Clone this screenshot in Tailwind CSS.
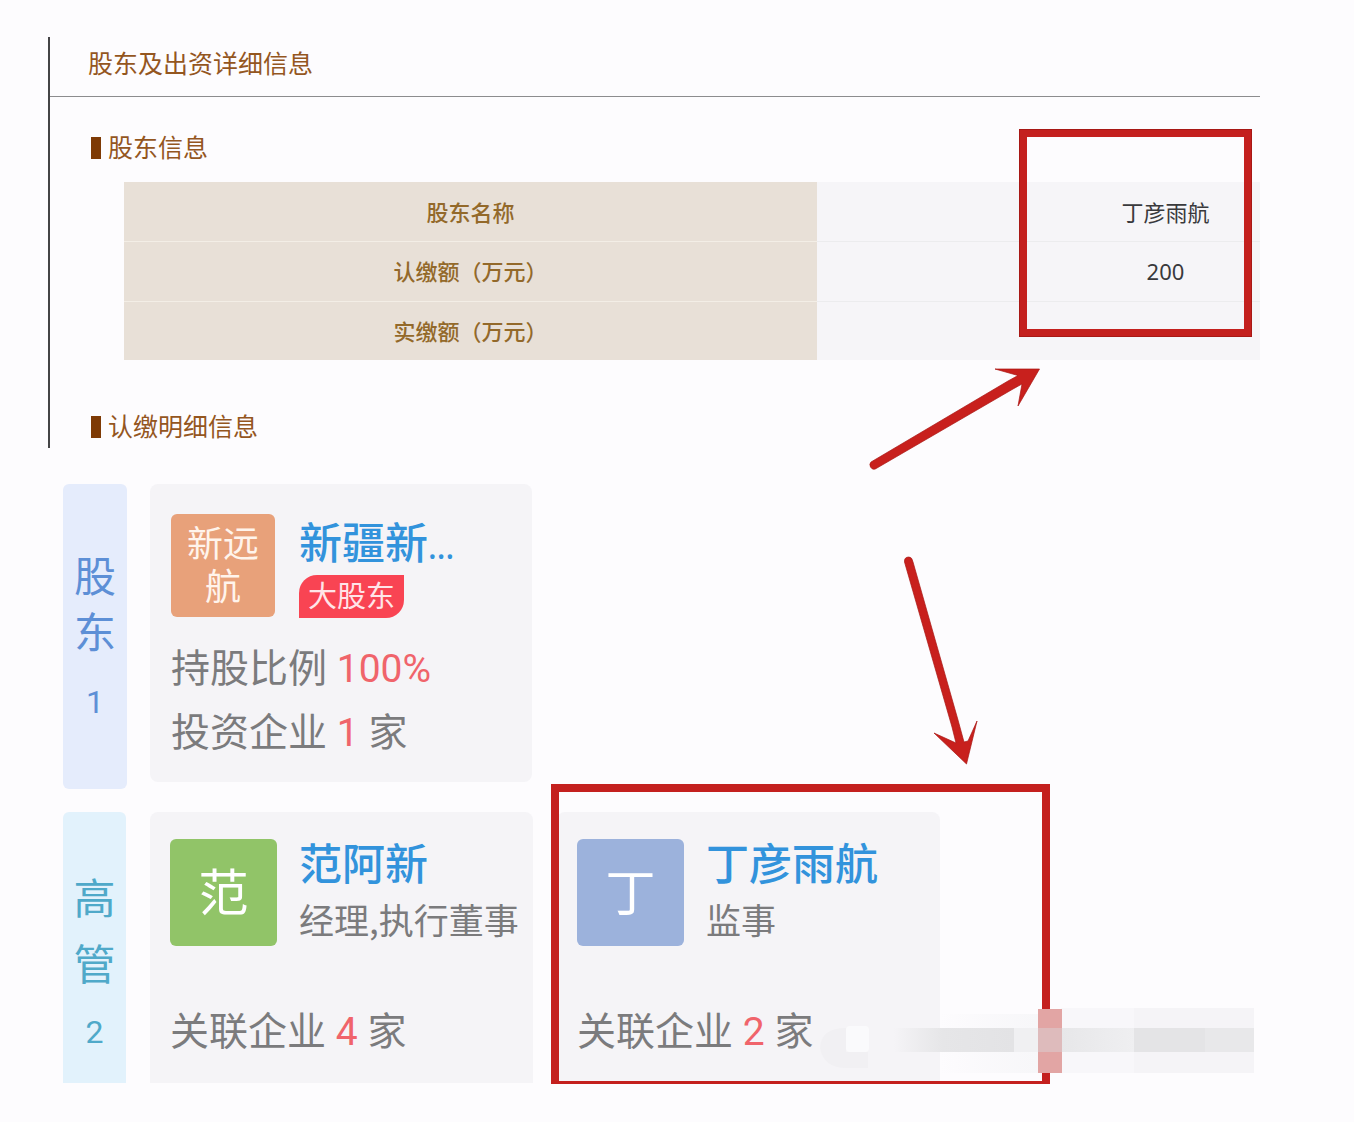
<!DOCTYPE html>
<html lang="zh-CN">
<head>
<meta charset="utf-8">
<meta name="viewport" content="width=device-width, initial-scale=1">
<title>股东及出资详细信息</title>
<script src="https://cdn.jsdelivr.net/npm/@tailwindcss/browser@4"></script>
</head>
<body class="bg-[#fdfcfe] font-['Noto_Sans_CJK_SC',sans-serif]">
<main class="relative pt-[37px] pb-10">

  <!-- Registry record -->
  <section class="relative ml-12 mr-[94px] border-l-2 border-[#444446] pb-[6px] text-[25px] leading-[30px] text-[#94561f]">
    <h1 class="border-b border-[#8c8c8e] pt-[10px] pb-[19px] pl-[38px]">股东及出资详细信息</h1>
    <h2 class="mt-9 flex items-center gap-[7px] pl-[41px]"><span class="h-[22px] w-[10px] bg-[#7e3a05]"></span><span class="pb-[3px] leading-[27px]">股东信息</span></h2>
    <div class="mt-[19px] pl-[74px]">
      <table class="w-full table-fixed border-collapse text-[22px]">
        <tbody>
          <tr class="h-[59px] border-b border-[#ececee]">
            <th scope="row" class="w-[61%] border-b border-[#f3eee6] bg-[#e8e0d7] font-medium text-[#93692a]">股东名称</th>
            <td class="bg-[#f6f5f8] pl-[254px] text-center text-[#39393c]">丁彦雨航</td>
          </tr>
          <tr class="h-[60px] border-b border-[#ececee]">
            <th scope="row" class="border-b border-[#f3eee6] bg-[#e8e0d7] pb-[2px] font-medium text-[#93692a]">认缴额（万元）</th>
            <td class="bg-[#f6f5f8] pl-[254px] text-center font-['Noto_Sans',sans-serif] text-[#39393c]">200</td>
          </tr>
          <tr class="h-[59px]">
            <th scope="row" class="bg-[#e8e0d7] pb-[2px] font-medium text-[#93692a]">实缴额（万元）</th>
            <td class="bg-[#f6f5f8]"></td>
          </tr>
        </tbody>
      </table>
    </div>
    <h2 class="mt-[52px] flex items-center gap-[7px] pl-[41px]"><span class="h-[22px] w-[10px] bg-[#7e3a05]"></span><span class="pb-[3px] leading-[27px]">认缴明细信息</span></h2>
    <!-- Highlight around the shareholder's name -->
    <div class="absolute top-[92px] right-2 h-[208px] w-[233px] border-8 border-[#c4201e] outline-1 -outline-offset-1 outline-[#a81815]"></div>
  </section>

  <!-- Shareholders -->
  <section class="mt-9 flex items-start gap-[23px] pl-[63px]">
    <h2 class="flex h-[305px] w-16 flex-col items-center rounded-md bg-[#e5ecfc] pt-[62px] text-[42px] leading-[56px] text-[#5d8fd6]">
      <span>股</span><span>东</span><span class="mt-4 font-[Roboto,sans-serif] text-[32px]">1</span>
    </h2>
    <article class="h-[298px] w-[382px] rounded-lg bg-[#f5f4f7] pt-[30px] pl-[21px] text-[39px] leading-[64px] text-[#7b7b7d]">
      <div class="flex gap-6">
        <div class="flex h-[103px] w-[104px] items-center justify-center rounded-md bg-[#e8a17a] px-4 pb-[5px] text-center text-[36px] leading-[43px] text-[#fff4ec]">新远航</div>
        <div class="h-[103px]">
          <a href="#" class="block h-[61px] text-[43px] leading-[52px] font-medium text-[#3293dc]">新疆新<span class="font-['Noto_Sans',sans-serif] text-[32px]">...</span></a>
          <span class="flex h-[43px] w-[105px] items-center justify-center rounded-tl-[18px] rounded-br-[18px] bg-[#f94453] pb-[6px] text-[29px] text-[#ffe5e8]">大股东</span>
        </div>
      </div>
      <p class="mt-4 h-16">持股比例 <span class="mx-px font-[Roboto,sans-serif] text-[#f0646b]">100%</span></p>
      <p class="h-16">投资企业 <span class="mx-px font-[Roboto,sans-serif] text-[#f0646b]">1</span> 家</p>
    </article>
  </section>

  <!-- Executives -->
  <section class="mt-[23px] flex items-start pl-[63px]">
    <h2 class="flex h-[271px] w-[63px] flex-col items-center rounded-t-md bg-[#e2f2fc] pt-[51px] text-[42px] leading-[66px] text-[#4fa9c9]">
      <span>高</span><span>管</span><span class="mt-1 font-[Roboto,sans-serif] text-[32px]">2</span>
    </h2>
    <article class="ml-6 h-[271px] w-[383px] rounded-t-lg bg-[#f5f4f7] pt-[27px] pl-5 text-[39px] leading-[64px] text-[#7b7b7d]">
      <div class="flex gap-[22px]">
        <div class="flex size-[107px] items-center justify-center rounded-md bg-[#91c468] pb-2 text-[50px] text-white">范</div>
        <div class="whitespace-nowrap">
          <a href="#" class="block text-[43px] leading-[44px] font-medium text-[#3293dc]">范阿新</a>
          <p class="text-[35px] leading-[72px]">经理,执行董事</p>
        </div>
      </div>
      <p class="mt-[41px]">关联企业 <span class="mx-px font-[Roboto,sans-serif] text-[#f0646b]">4</span> 家</p>
    </article>
    <article class="ml-6 h-[271px] w-[383px] rounded-t-lg bg-[#f5f4f7] pt-[27px] pl-5 text-[39px] leading-[64px] text-[#7b7b7d]">
      <div class="flex gap-[22px]">
        <div class="flex size-[107px] items-center justify-center rounded-md bg-[#9cb2dc] pb-2 text-[50px] text-white">丁</div>
        <div class="whitespace-nowrap">
          <a href="#" class="block text-[43px] leading-[44px] font-medium text-[#3293dc]">丁彦雨航</a>
          <p class="text-[35px] leading-[72px]">监事</p>
        </div>
      </div>
      <p class="mt-[41px]">关联企业 <span class="mx-px font-[Roboto,sans-serif] text-[#f0646b]">2</span> 家</p>
    </article>
  </section>

  <!-- Highlight around the supervisor card -->
  <div class="absolute top-[784px] left-[551px] h-[300px] w-[499px] border-t-8 border-r-8 border-b-[3px] border-l-8 border-[#c4201e]"></div>

  <!-- Arrows -->
  <svg class="pointer-events-none absolute top-[360px] left-[860px]" width="200" height="420" viewBox="860 360 200 420" fill="#c8201d" stroke="#a91613" stroke-width=".7" aria-hidden="true">
    <path d="M871 462 L1008 381 L1018 375.500 L995 369 L1039.500 369 L1018 406 L1022 384 L1013 389 L877 468 Q873 471 870.500 467 Q869 464 871 462Z"/>
    <path d="M904.500 562 Q904 557 909 557 Q912 557 913 562 L958 720 L964 742 L968 741 L977 721 L966.500 764 L934 733 L956 743 L952 727 Z"/>
  </svg>

  <!-- Pixelated patch -->
  <svg class="pointer-events-none absolute top-[1007px] left-[820px]" width="434" height="68" viewBox="820 1007 434 68" aria-hidden="true">
    <defs>
      <linearGradient id="fade"><stop offset="0" stop-color="#e4e4e6" stop-opacity="0"/><stop offset=".4" stop-color="#e6e6e8"/><stop offset="1" stop-color="#e3e3e5"/></linearGradient>
      <linearGradient id="band"><stop offset="0" stop-color="#e7e7e9"/><stop offset="1" stop-color="#efeff1"/></linearGradient>
      <linearGradient id="soft"><stop offset="0" stop-color="#f6f5f8" stop-opacity="0"/><stop offset="1" stop-color="#f7f7f9"/></linearGradient>
    </defs>
    <path d="M940 1014H1038V1073H940Z" fill="url(#soft)"/>
    <path d="M1061 1008H1134V1073H1061Z" fill="#f8f7fa"/>
    <path d="M1134 1008H1254V1073H1134Z" fill="#f5f4f7"/>
    <path d="M846 1028Q821 1028 820 1048Q824 1068 846 1068H868V1052H846Z" fill="#f1f0f3"/>
    <rect x="846" y="1026" width="23" height="26" rx="4" fill="#fafafc"/>
    <path d="M894 1028H1014V1052H894Z" fill="url(#fade)"/>
    <path d="M1014 1028H1038V1052H1014Z" fill="#f0f0f2"/>
    <path d="M1061 1028H1134V1052H1061Z" fill="url(#band)"/>
    <path d="M1134 1028H1205V1052H1134Z" fill="#e4e4e6"/>
    <path d="M1205 1028H1254V1052H1205Z" fill="#e8e8ea"/>
    <path d="M1038 1009H1062V1073H1038Z" fill="#e2a5a4"/>
    <path d="M1038 1028H1062V1052H1038Z" fill="#debbbc"/>
  </svg>
</main>
</body>
</html>
